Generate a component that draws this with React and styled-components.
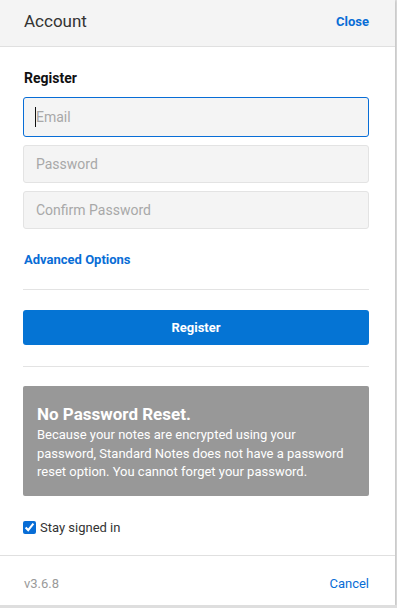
import React from "react";
import styled, { createGlobalStyle } from "styled-components";

const Global = createGlobalStyle`
  html, body { margin: 0; padding: 0; }
  body {
    background: #dedede;
    font-family: Roboto, "Noto Sans", "Liberation Sans", sans-serif;
    -webkit-font-smoothing: antialiased;
  }
  * { box-sizing: border-box; }
`;

const Panel = styled.div`
  width: 395px;
  height: 605px;
  background: #fff;
  display: flex;
  flex-direction: column;
  box-shadow: 1px 1px 2px rgba(0,0,0,0.12);
`;

const Header = styled.div`
  height: 47px;
  flex: none;
  display: flex;
  align-items: center;
  justify-content: space-between;
  padding: 0 26px 4px 24px;
  background: #f4f4f4;
  border-bottom: 1px solid #e0e0e0;
`;

const Title = styled.div`
  font-size: 17px;
  color: #333;
`;

const LinkText = styled.a`
  font-size: 13px;
  font-weight: ${(p) => (p.$bold ? 700 : 400)};
  color: #086dd6;
  cursor: pointer;
`;

const Body = styled.div`
  flex: 1;
  display: flex;
  flex-direction: column;
  padding: 23px 26px 0 23px;
`;

const SectionTitle = styled.div`
  font-size: 14px;
  font-weight: 700;
  color: #111;
  line-height: 17px;
  margin: 0 0 10px 1px;
`;

const Fields = styled.div`
  display: flex;
  flex-direction: column;
  gap: 8px;
`;

const FieldWrap = styled.div`
  position: relative;
  height: ${(p) => (p.$focused ? 40 : 38)}px;
`;

const Input = styled.input`
  width: 100%;
  height: 100%;
  padding: 0 12px;
  font-family: inherit;
  font-size: 14px;
  color: #333;
  background: #f4f4f4;
  border: ${(p) => (p.$focused ? "1.5px solid #086dd6" : "1px solid #e3e3e3")};
  border-radius: 3px;
  outline: none;
  &::placeholder { color: #a8a8a8; }
`;

const Caret = styled.span`
  position: absolute;
  left: 12px;
  top: 10px;
  width: 1px;
  height: 20px;
  background: #111;
`;

const AdvancedLink = styled(LinkText)`
  display: block;
  margin: 23px 0 0 1px;
  line-height: 16px;
`;

const Rule = styled.hr`
  border: none;
  border-top: 1px solid #e3e3e3;
  margin: ${(p) => p.$top}px 0 ${(p) => p.$bottom}px;
  width: 100%;
`;

const PrimaryButton = styled.button`
  height: 35px;
  width: 100%;
  border: none;
  border-radius: 3px;
  background: #0574d4;
  color: #fff;
  font-family: inherit;
  font-size: 13px;
  font-weight: 700;
  cursor: pointer;
`;

const Notice = styled.div`
  background: #989898;
  border-radius: 2px;
  padding: 18px 14px 14px;
  height: 110px;
  color: #fff;
`;

const NoticeTitle = styled.div`
  font-size: 17px;
  font-weight: 700;
  line-height: 20px;
  margin-bottom: 2px;
`;

const NoticeText = styled.div`
  font-size: 13px;
  line-height: 18.5px;
`;

const CheckRow = styled.label`
  display: flex;
  align-items: center;
  gap: 4px;
  margin-top: 24px;
  font-size: 13px;
  color: #333;
`;

const Check = styled.input`
  width: 13px;
  height: 13px;
  margin: 0;
  accent-color: #086dd6;
`;

const Footer = styled.div`
  height: 50px;
  flex: none;
  display: flex;
  align-items: center;
  justify-content: space-between;
  padding: 6px 26px 0 24px;
  border-top: 1px solid #e0e0e0;
`;

const Version = styled.div`
  font-size: 13px;
  color: #9a9a9a;
`;

export default function App() {
  return (
    <>
      <Global />
      <Panel>
        <Header>
          <Title>Account</Title>
          <LinkText $bold>Close</LinkText>
        </Header>
        <Body>
          <SectionTitle>Register</SectionTitle>
          <Fields>
            <FieldWrap $focused>
              <Input $focused placeholder="Email" readOnly />
              <Caret />
            </FieldWrap>
            <FieldWrap>
              <Input type="password" placeholder="Password" readOnly />
            </FieldWrap>
            <FieldWrap>
              <Input type="password" placeholder="Confirm Password" readOnly />
            </FieldWrap>
          </Fields>
          <AdvancedLink $bold>Advanced Options</AdvancedLink>
          <Rule $top={21} $bottom={20} />
          <PrimaryButton>Register</PrimaryButton>
          <Rule $top={21} $bottom={19} />
          <Notice>
            <NoticeTitle>No Password Reset.</NoticeTitle>
            <NoticeText>
              Because your notes are encrypted using your password, Standard Notes does not have a password reset option. You cannot forget your password.
            </NoticeText>
          </Notice>
          <CheckRow>
            <Check type="checkbox" defaultChecked />
            Stay signed in
          </CheckRow>
        </Body>
        <Footer>
          <Version>v3.6.8</Version>
          <LinkText>Cancel</LinkText>
        </Footer>
      </Panel>
    </>
  );
}
